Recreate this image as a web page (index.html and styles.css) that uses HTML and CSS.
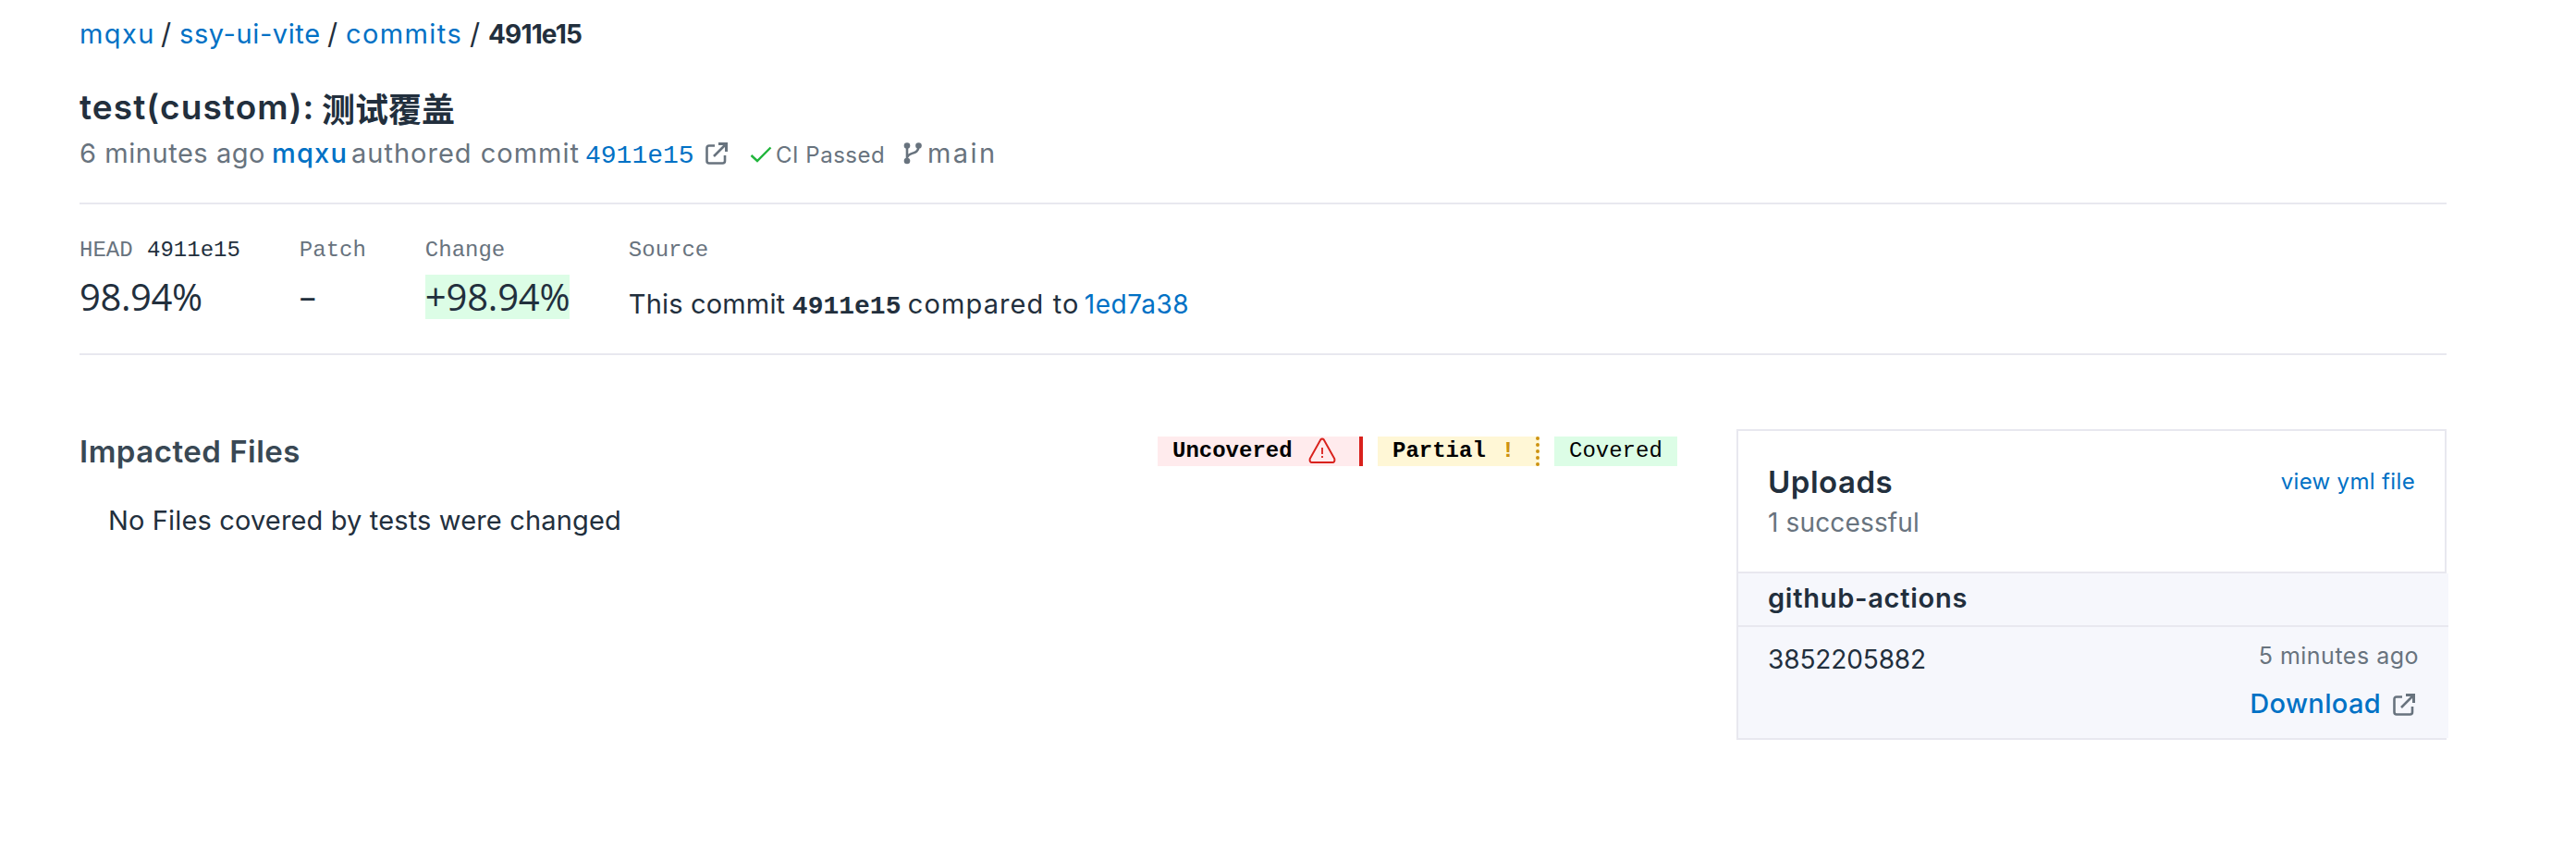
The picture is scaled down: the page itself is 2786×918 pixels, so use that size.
FILE: index.html
```
<!DOCTYPE html>
<html lang="en">
<head>
<meta charset="utf-8">
<title>Commit 4911e15</title>
<link rel="stylesheet" href="styles.css">
</head>
<body>
<svg class="defs" width="0" height="0">
  <symbol id="external" viewBox="0 0 24 24">
    <path d="M10 3.5H4Q1.5 3.5 1.5 6V20Q1.5 22.5 4 22.5H18.500Q21 22.500 21 20V14M9 15L21 3" fill="none" stroke="currentColor" stroke-width="2.6"/>
    <path d="M14 0H24V10H21V5L19 3H14Z" fill="currentColor"/>
  </symbol>
</svg>
<main class="page">
  <nav class="breadcrumb">
    <a class="crumb-owner">mqxu</a><span class="slash">/</span><a class="crumb-repo">ssy-ui-vite</a><span class="slash">/</span><a class="crumb-section">commits</a><span class="slash">/</span><strong class="crumb-sha">4911e15</strong>
  </nav>
  <h1 class="title"><span class="title-text">test(custom):</span><span class="title-cjk">测试覆盖</span></h1>
  <div class="byline">
    <span class="by-time">6 minutes ago</span><a class="by-author">mqxu</a><span class="by-verb">authored commit</span><a class="by-sha mono">4911e15</a>
    <svg class="icon-external"><use href="#external"/></svg>
    <svg class="icon-check" viewBox="0 0 24 18"><path d="M1.500 10L8 16L22.500 1.500" fill="none" stroke="#21b53c" stroke-width="2.4"/></svg>
    <span class="ci">CI Passed</span>
    <svg class="icon-branch" viewBox="0 0 20 24"><g fill="currentColor"><circle cx="4" cy="3.500" r="3.300"/><circle cx="4" cy="20" r="3.300"/><circle cx="16.500" cy="3.500" r="3.300"/></g><path d="M4 3V20M16.500 4C16.500 14 5 10 4.500 16" fill="none" stroke="currentColor" stroke-width="2.600"/></svg>
    <span class="branch">main</span>
  </div>
  <section class="stats">
    <div class="stat"><div class="label mono">HEAD <span class="dark head-sha">4911e15</span></div><div class="value">98.94%</div></div>
    <div class="stat"><div class="label mono">Patch</div><div class="value dash">–</div></div>
    <div class="stat"><div class="label mono">Change</div><div class="value change">+98.94%</div></div>
    <div class="stat"><div class="label mono">Source</div><div class="source"><span class="src-a">This commit</span><strong class="src-sha mono">4911e15</strong><span class="src-b">compared to</span><a class="src-link">1ed7a38</a></div></div>
  </section>
  <div class="columns">
    <section class="files">
      <div class="files-head">
        <h2 class="files-title">Impacted Files</h2>
        <div class="legend mono">
          <span class="tag uncovered">Uncovered<svg class="icon-warn" viewBox="0 0 30 28"><path d="M13.200 2.500Q15 .3 16.800 2.500L28.300 23Q29 26.800 26 27H4Q1 26.800 1.700 23Z" fill="none" stroke="#d9211c" stroke-width="2"/><path d="M15 11V18M15 20V22" stroke="#d9211c" stroke-width="1.800"/></svg></span>
          <span class="tag partial">Partial<span class="bang">!</span></span>
          <span class="tag covered">Covered</span>
        </div>
      </div>
      <p class="empty">No Files covered by tests were changed</p>
    </section>
    <aside class="uploads">
      <div class="up-head">
        <div><h2 class="up-title">Uploads</h2><div class="up-count">1 successful</div></div>
        <a class="yml">view yml file</a>
      </div>
      <div class="provider">github-actions</div>
      <div class="upload">
        <span class="build">3852205882</span>
        <div class="up-side">
          <div class="age">5 minutes ago</div>
          <div class="dl-row"><a class="download">Download</a><svg class="icon-external"><use href="#external"/></svg></div>
        </div>
      </div>
    </aside>
  </div>
</main>
</body>
</html>
```
FILE: styles.css
```
* { box-sizing: border-box; }
body { margin: 0; background: #fff; color: #222f3d; font: 29px/42px Inter, "Noto Sans CJK SC", sans-serif; white-space: nowrap; }
h1, h2, p { margin: 0; }
a { color: #0071c5; }
svg { display: block; flex: none; }
.defs { position: absolute; }
.mono { font-family: "Liberation Mono", monospace; }
.page { width: 2560px; margin-left: 86px; padding-top: 17px; }

.breadcrumb { display: flex; height: 40px; line-height: 40px; }
.slash { width: 20px; font-size: 31px; }
.crumb-owner { width: 88px; letter-spacing: 1.4px; }
.crumb-repo { width: 160px; letter-spacing: .6px; }
.crumb-section { width: 134px; letter-spacing: 1.4px; }
.crumb-sha { font-size: 28px; font-weight: 700; letter-spacing: -.85px; }

.title { display: flex; height: 54px; margin-top: 32px; font-size: 37px; line-height: 54px; font-weight: 600; }
.title-text { width: 262px; letter-spacing: 1.1px; }
.title-cjk { font-family: "Noto Sans CJK SC", sans-serif; font-size: 36px; font-weight: 700; }

.byline { display: flex; align-items: baseline; height: 42px; margin-top: 2px; color: #68737e; }
.byline svg { align-self: flex-start; }
.by-time { width: 208px; letter-spacing: .55px; }
.by-author { width: 86px; font-weight: 500; letter-spacing: 1.2px; }
.by-verb { width: 253px; letter-spacing: 1px; }
.by-sha { width: 130px; font-size: 28px; }
.icon-external { width: 24px; height: 24px; color: #68737e; }
.byline .icon-external { margin-top: 9px; }
.icon-check { width: 24px; height: 18px; margin: 13px 4px 0 24px; }
.ci { width: 138px; font-size: 24px; letter-spacing: .52px; }
.icon-branch { width: 20px; height: 24px; margin: 9px 6px 0 0; }
.branch { letter-spacing: 2.4px; }

.stats { display: flex; gap: 64px; height: 165px; margin-top: 32px; padding-top: 34px; border-top: 2px solid #e8e8ef; border-bottom: 2px solid #e8e8ef; }
.label { height: 32px; font-size: 24px; line-height: 32px; color: #68737e; }
.dark { color: #222f3d; }
.head-sha { margin-left: 1px; }
.value { height: 48px; margin-top: 10px; font: 40px/48px "Open Sans", sans-serif; letter-spacing: -.4px; }
.dash { font-size: 36px; }
.change { width: 156px; background: #dcfde6; letter-spacing: -.2px; }
.source { display: flex; align-items: baseline; margin-top: 21px; }
.src-a { width: 177px; letter-spacing: .16px; }
.src-sha { width: 125px; font-size: 28px; }
.src-b { width: 191px; letter-spacing: 1.1px; }
.src-link { font-size: 28px; letter-spacing: .5px; }

.columns { display: flex; gap: 64px; margin-top: 80px; }
.files { width: 1728px; }
.files-head { display: flex; justify-content: space-between; height: 48px; }
.files-title { font-size: 33px; line-height: 48px; font-weight: 600; color: #394854; letter-spacing: .5px; }
.legend { display: flex; gap: 16px; height: 32px; margin-top: 8px; font-size: 24px; line-height: 32px; color: #000; }
.tag { display: flex; height: 32px; padding-left: 16px; }
.uncovered { width: 222px; background: #ffebed; border-right: 4px solid #d9211c; font-weight: 700; }
.icon-warn { width: 30px; height: 28px; margin: 1px 0 0 17px; }
.partial { width: 175px; background: #fff7d6; border-right: 4px dotted #cd9210; font-weight: 700; }
.bang { margin-left: 17px; color: #cd9210; }
.covered { width: 133px; background: #dcfde6; }
.empty { margin: 30px 0 0 31px; letter-spacing: .15px; }

.uploads { width: 768px; height: 336px; border-left: 2px solid #e8e8ef; border-bottom: 2px solid #e8e8ef; }
.up-head { display: flex; justify-content: space-between; height: 156px; padding: 31px 32px 0 32px; border: 2px solid #e8e8ef; border-left: 0; }
.up-title { height: 48px; font-size: 33px; line-height: 48px; font-weight: 600; letter-spacing: .5px; }
.up-count { margin-top: -1px; font-size: 28px; color: #68737e; letter-spacing: .15px; }
.yml { padding-top: 3px; font-size: 24px; letter-spacing: .35px; }
.provider { width: 768px; height: 58px; padding: 6px 32px 0; background: #f6f7fc; border-bottom: 2px solid #e8e8ef; font-weight: 600; letter-spacing: .73px; }
.upload { display: flex; justify-content: space-between; width: 768px; height: 120px; padding: 14px 32px 0; background: #f6f7fc; }
.build { font-size: 28px; letter-spacing: -.12px; }
.up-side { display: flex; flex-direction: column; align-items: flex-end; }
.age { height: 36px; margin-top: -1px; font-size: 25px; line-height: 36px; color: #68737e; letter-spacing: .5px; }
.dl-row { display: flex; gap: 13px; margin: 13px 4px 0 0; }
.download { font-weight: 500; letter-spacing: .34px; }
.dl-row .icon-external { margin-top: 10px; }
```
